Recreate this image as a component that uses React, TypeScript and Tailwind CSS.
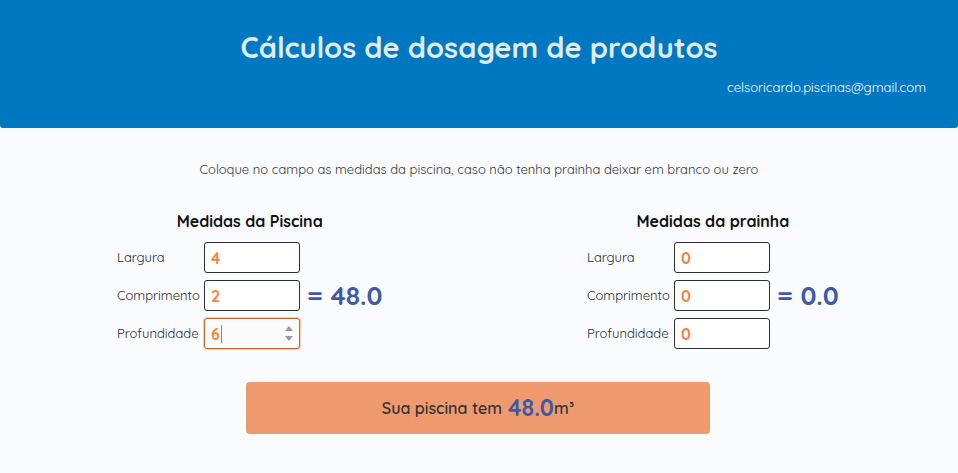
import React from "react";

function Field({ value, focused = false }: { value: string; focused?: boolean }) {
  if (focused) {
    return (
      <div className="flex h-[31px] w-[96px] items-center rounded-[3px] border border-[#c9652f] bg-[#fbfbfb] pl-[6px] pr-[6px] shadow-[0_0_0_1px_#f6cdb3]">
        <span className="text-[16px] font-bold text-[#f5843f]">{value}</span>
        <span className="ml-[1px] h-[18px] w-[1px] bg-[#e2702f]" />
        <span className="ml-auto flex flex-col items-center gap-[5px]">
          <svg width="8" height="5" viewBox="0 0 8 5"><path d="M0 5 L4 0 L8 5 Z" fill="#9a9a9a" /></svg>
          <svg width="8" height="5" viewBox="0 0 8 5"><path d="M0 0 L8 0 L4 5 Z" fill="#9a9a9a" /></svg>
        </span>
      </div>
    );
  }
  return (
    <div className="flex h-[31px] w-[96px] items-center rounded-[3px] border border-[#2e2e2e] bg-white pl-[6px]">
      <span className="text-[16px] font-bold text-[#f5843f]">{value}</span>
    </div>
  );
}

function Block({
  title,
  values,
  result,
  focusedIndex,
}: {
  title: string;
  values: string[];
  result: string;
  focusedIndex?: number;
}) {
  const labels = ["Largura", "Comprimento", "Profundidade"];
  return (
    <div className="inline-flex flex-col">
      <h2 className="mt-[2px] h-[24px] text-center text-[16px] font-bold leading-[24px] text-[#111]">{title}</h2>
      <div className="mt-[9px] flex items-center">
        <div className="flex flex-col gap-[7px]">
          {labels.map((l, i) => (
            <div key={l} className="flex items-center">
              <span className="w-[87px] text-[13px] text-[#2a2a2a]">{l}</span>
              <Field value={values[i]} focused={focusedIndex === i} />
            </div>
          ))}
        </div>
        <span className="ml-[7px] text-[26px] font-bold text-[#4058a8]">= {result}</span>
      </div>
    </div>
  );
}

export default function App() {
  return (
    <div
      className="min-h-[473px] w-full bg-[#f9fbfe]"
      style={{ fontFamily: "'Quicksand', 'Noto Sans', sans-serif" }}
    >
      <header className="flex h-[128px] flex-col rounded-b-[3px] bg-[#0078c1]">
        <h1 className="mt-[27px] text-center text-[29px] font-bold leading-[40px] text-[#dfecf6]">
          Cálculos de dosagem de produtos
        </h1>
        <div className="mt-[11px] pr-[32px] text-right text-[13px] text-white">
          celsoricardo.piscinas@gmail.com
        </div>
      </header>
      <p className="mt-[32px] text-center text-[13px] leading-[18px] text-[#333]">
        Coloque no campo as medidas da piscina, caso não tenha prainha deixar em branco ou zero
      </p>
      <div className="mt-[29px] flex pl-[117px]">
        <div className="w-[470px]">
          <Block title="Medidas da Piscina" values={["4", "2", "6"]} result="48.0" focusedIndex={2} />
        </div>
        <div>
          <Block title="Medidas da prainha" values={["0", "0", "0"]} result="0.0" />
        </div>
      </div>
      <div className="mt-[33px] flex justify-center pr-[2px]">
        <div className="flex h-[52px] w-[464px] items-center justify-center rounded-[4px] bg-[#ee9a6e]">
          <span className="text-[16px] font-semibold text-[#333]">Sua piscina tem</span>
          <span className="ml-[6px] text-[23px] font-bold text-[#4058a8]">48.0</span>
          <span className="text-[16px] font-semibold text-[#333]">m³</span>
        </div>
      </div>
    </div>
  );
}
